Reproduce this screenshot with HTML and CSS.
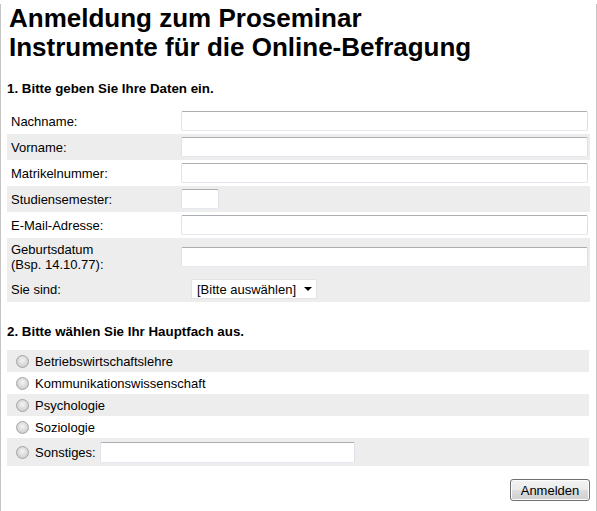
FILE: index.html
```html
<!DOCTYPE html>
<html lang="de">
<head>
<meta charset="utf-8">
<title>Anmeldung zum Proseminar</title>
<link rel="stylesheet" href="styles.css">
</head>
<body>
<div class="page">
  <h1 class="title">Anmeldung zum Proseminar<br>Instrumente für die Online-Befragung</h1>
  <form class="form">
    <h2 class="section">1. Bitte geben Sie Ihre Daten ein.</h2>
    <table class="data">
      <tr>
        <td class="lbl">Nachname:</td>
        <td class="fld"><input class="txt" type="text"></td>
      </tr>
      <tr class="alt">
        <td class="lbl">Vorname:</td>
        <td class="fld"><input class="txt" type="text"></td>
      </tr>
      <tr>
        <td class="lbl">Matrikelnummer:</td>
        <td class="fld"><input class="txt" type="text"></td>
      </tr>
      <tr class="alt">
        <td class="lbl">Studiensemester:</td>
        <td class="fld"><input class="txt short" type="text"></td>
      </tr>
      <tr>
        <td class="lbl">E-Mail-Adresse:</td>
        <td class="fld"><input class="txt" type="text"></td>
      </tr>
      <tr class="alt">
        <td class="lbl">Geburtsdatum<br>(Bsp. 14.10.77):</td>
        <td class="fld"><input class="txt" type="text"></td>
      </tr>
      <tr class="alt">
        <td class="lbl">Sie sind:</td>
        <td class="fld">
          <span class="selwrap"><select class="sel"><option>[Bitte auswählen]</option></select></span>
        </td>
      </tr>
    </table>

    <h2 class="section second">2. Bitte wählen Sie Ihr Hauptfach aus.</h2>
    <div class="choices">
      <label class="choice alt"><input class="radio" type="radio" name="fach">Betriebswirtschaftslehre</label>
      <label class="choice"><input class="radio" type="radio" name="fach">Kommunikationswissenschaft</label>
      <label class="choice alt"><input class="radio" type="radio" name="fach">Psychologie</label>
      <label class="choice"><input class="radio" type="radio" name="fach">Soziologie</label>
      <label class="choice alt other"><input class="radio" type="radio" name="fach">Sonstiges:<input class="txt other-txt" type="text"></label>
    </div>

    <div class="actions">
      <button class="btn" type="button">Anmelden</button>
    </div>
  </form>
</div>
</body>
</html>
```
FILE: styles.css
```css
html, body {
  margin: 0;
  padding: 0;
  background: #ffffff;
}

body {
  font-family: "Liberation Sans", Arial, sans-serif;
  font-size: 13px;
  color: #000;
}

.page {
  box-sizing: border-box;
  width: 597px;
  height: 510px;
  border: 1px solid #c4c4c4;
  border-top: 0;
  padding: 0 5px 0 6px;
}

.title {
  margin: 4px 0 0 2px;
  font-size: 26px;
  line-height: 29px;
  font-weight: bold;
}

.form {
  margin: 0;
}

.section {
  margin: 19px 0 12px 0;
  font-size: 13.33px;
  line-height: 15px;
  font-weight: bold;
}

.section.second {
  margin: 22px 0 11px 0;
}

.data {
  width: 583px;
  border-collapse: collapse;
  border-spacing: 0;
}

.data td {
  padding: 3px 0;
  vertical-align: middle;
  line-height: 15px;
}

.data .lbl {
  width: 170px;
  padding: 4px 0 4px 4px;
}

.data .fld {
  padding-right: 2px;
}

.alt {
  background: #ededed;
}

.txt {
  box-sizing: border-box;
  display: block;
  width: 407px;
  height: 20px;
  margin: 0;
  padding: 1px 3px;
  border: 1px solid;
  border-color: #abadb3 #dbdfe6 #e3e9ef #e2e3ea;
  border-radius: 2px;
  background: #fff;
  font: 13px "Liberation Sans", Arial, sans-serif;
}

.txt.short {
  width: 38px;
}

.selwrap {
  position: relative;
  display: inline-block;
  margin-left: 10px;
  vertical-align: middle;
}

.selwrap::after {
  content: "";
  position: absolute;
  right: 5px;
  top: 8px;
  border-left: 4px solid transparent;
  border-right: 4px solid transparent;
  border-top: 4px solid #000;
  pointer-events: none;
}

.sel {
  -webkit-appearance: none;
  appearance: none;
  box-sizing: border-box;
  display: block;
  width: 126px;
  height: 20px;
  margin: 0;
  padding: 0 0 0 5px;
  border: 1px solid #e3e3e3;
  border-radius: 0;
  background: #fff;
  color: #000;
  font: 13px "Liberation Sans", Arial, sans-serif;
}

.choices {
  display: flex;
  flex-direction: column;
  width: 582px;
}

.choice {
  display: flex;
  align-items: center;
  height: 22px;
  padding-left: 9px;
  line-height: 15px;
}

.choice.other {
  height: 28px;
}

.radio {
  -webkit-appearance: none;
  appearance: none;
  box-sizing: border-box;
  width: 13px;
  height: 13px;
  margin: 1px 6px 0 0;
  border: 1px solid #a3a3a3;
  border-radius: 50%;
  background: radial-gradient(circle at 50% 40%, #f4f4f4 0%, #d9d9d9 55%, #c4c4c4 100%);
  flex: none;
}

.other-txt {
  width: 255px;
  height: 21px;
  margin-left: 4px;
}

.actions {
  display: flex;
  justify-content: flex-end;
  margin-top: 13px;
  padding-right: 1px;
}

.btn {
  box-sizing: border-box;
  width: 80px;
  height: 22px;
  margin: 0;
  padding: 0;
  border: 1px solid #707070;
  border-radius: 3px;
  background: linear-gradient(#f2f2f2 0%, #ebebeb 50%, #dddddd 51%, #cfcfcf 100%);
  box-shadow: inset 0 0 0 1px #fcfcfc;
  color: #000;
  font: 13px "Liberation Sans", Arial, sans-serif;
}
```
